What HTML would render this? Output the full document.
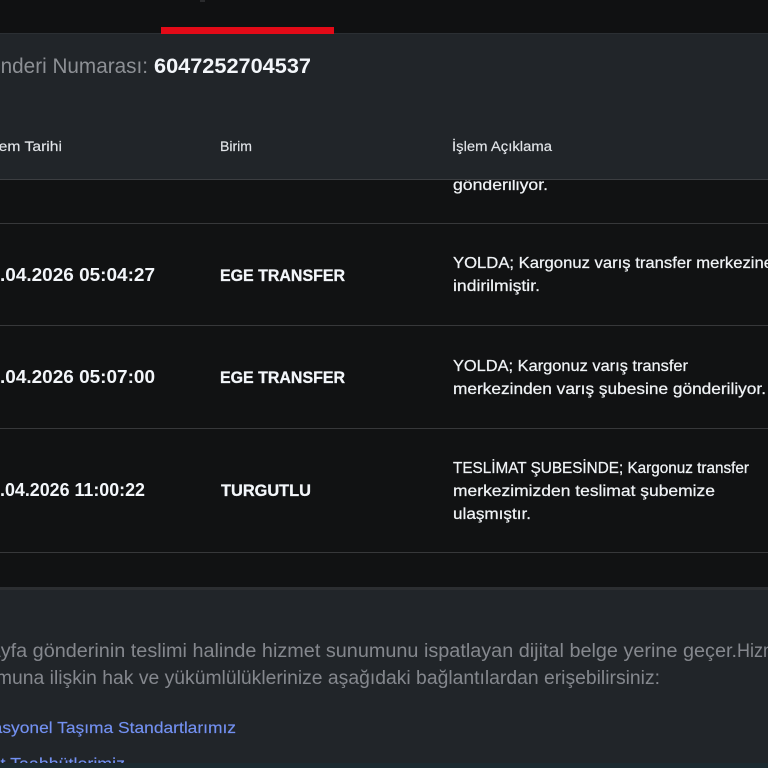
<!DOCTYPE html>
<html lang="tr">
<head>
<meta charset="utf-8">
<title>Gönderi Takip</title>
<style>
html,body{margin:0;padding:0;width:768px;height:768px;overflow:hidden;background:#111213}
svg{display:block;position:absolute;left:0;top:0}
text{font-family:"Liberation Sans",sans-serif;white-space:pre}
.b{font-weight:700;fill:#f3f6fa}
.u{stroke:#f3f6fa;stroke-width:.3px}
.d{fill:#f0f3f6;font-size:16px;stroke:#f0f3f6;stroke-width:.25px}
.h{fill:#e2e5e9;font-size:13.5px;stroke:#e2e5e9;stroke-width:.15px}
.p{fill:#85888e;font-size:19px}
.l{fill:#7391f2;font-size:16px;stroke:#7391f2;stroke-width:.15px}
</style>
</head>
<body>
<svg width="768" height="768" viewBox="0 0 768 768" xmlns="http://www.w3.org/2000/svg">
<rect width="768" height="768" fill="#111213"/>
<rect width="768" height="33" fill="#101112"/>
<rect x="200" y="0" width="5" height="2" fill="#2a2b2d"/>

<text class="d" x="453" y="190" textLength="95" lengthAdjust="spacingAndGlyphs">gönderiliyor.</text>

<rect x="0" y="33" width="768" height="147" fill="#212529"/>
<rect x="0" y="33" width="768" height="1" fill="#2b2f33"/>
<rect x="0" y="179" width="768" height="1" fill="#3c3e41"/>
<rect x="161" y="27" width="173" height="7" fill="#e30a17"/>

<text x="-27" y="73" font-size="21" fill="#8d9095" textLength="175" lengthAdjust="spacingAndGlyphs">Gönderi Numarası:</text>
<text class="b" x="154" y="73" font-size="21" textLength="157" lengthAdjust="spacingAndGlyphs">6047252704537</text>

<text class="h" x="-17" y="151" textLength="79" lengthAdjust="spacingAndGlyphs">İşlem Tarihi</text>
<text class="h" x="220" y="151" textLength="32" lengthAdjust="spacingAndGlyphs">Birim</text>
<text class="h" x="452" y="151" textLength="100" lengthAdjust="spacingAndGlyphs">İşlem Açıklama</text>

<rect x="0" y="223" width="768" height="1" fill="#37383a"/>
<rect x="0" y="325" width="768" height="1" fill="#37383a"/>
<rect x="0" y="428" width="768" height="1" fill="#37383a"/>
<rect x="0" y="552" width="768" height="1" fill="#37383a"/>

<text class="b" x="0" y="281" font-size="18" textLength="155" lengthAdjust="spacingAndGlyphs">.04.2026 05:04:27</text>
<text class="b u" x="220" y="281" font-size="17" textLength="125" lengthAdjust="spacingAndGlyphs">EGE TRANSFER</text>
<text class="d" x="453" y="268" textLength="320" lengthAdjust="spacingAndGlyphs">YOLDA; Kargonuz varış transfer merkezine</text>
<text class="d" x="453" y="291" textLength="87" lengthAdjust="spacingAndGlyphs">indirilmiştir.</text>

<text class="b" x="0" y="383" font-size="18" textLength="155" lengthAdjust="spacingAndGlyphs">.04.2026 05:07:00</text>
<text class="b u" x="220" y="383" font-size="17" textLength="125" lengthAdjust="spacingAndGlyphs">EGE TRANSFER</text>
<text class="d" x="453" y="371" textLength="235" lengthAdjust="spacingAndGlyphs">YOLDA; Kargonuz varış transfer</text>
<text class="d" x="453" y="394" textLength="313" lengthAdjust="spacingAndGlyphs">merkezinden varış şubesine gönderiliyor.</text>

<text class="b" x="0" y="496" font-size="18" textLength="145" lengthAdjust="spacingAndGlyphs">.04.2026 11:00:22</text>
<text class="b u" x="221" y="496" font-size="17" textLength="90" lengthAdjust="spacingAndGlyphs">TURGUTLU</text>
<text class="d" x="453" y="473" textLength="296" lengthAdjust="spacingAndGlyphs">TESLİMAT ŞUBESİNDE; Kargonuz transfer</text>
<text class="d" x="453" y="496" textLength="262" lengthAdjust="spacingAndGlyphs">merkezimizden teslimat şubemize</text>
<text class="d" x="453" y="519" textLength="78" lengthAdjust="spacingAndGlyphs">ulaşmıştır.</text>

<rect x="0" y="587" width="768" height="176" fill="#212529"/>
<rect x="0" y="587" width="768" height="3" fill="#2c2e31"/>

<text class="p" x="-50" y="657" textLength="787" lengthAdjust="spacingAndGlyphs">Bu sayfa gönderinin teslimi halinde hizmet sunumunu ispatlayan dijital belge yerine geçer.</text>
<text class="p" x="737" y="657" textLength="56" lengthAdjust="spacingAndGlyphs">Hizmet</text>
<text class="p" x="-46" y="684" textLength="706" lengthAdjust="spacingAndGlyphs">sunumuna ilişkin hak ve yükümlülüklerinize aşağıdaki bağlantılardan erişebilirsiniz:</text>

<text class="l" x="-46" y="733" textLength="282" lengthAdjust="spacingAndGlyphs">Operasyonel Taşıma Standartlarımız</text>
<text class="l" x="-50" y="769" textLength="175" lengthAdjust="spacingAndGlyphs">Hizmet Taahhütlerimiz</text>

<rect x="0" y="763" width="768" height="5" fill="#1c2a30"/>
</svg>
</body>
</html>
